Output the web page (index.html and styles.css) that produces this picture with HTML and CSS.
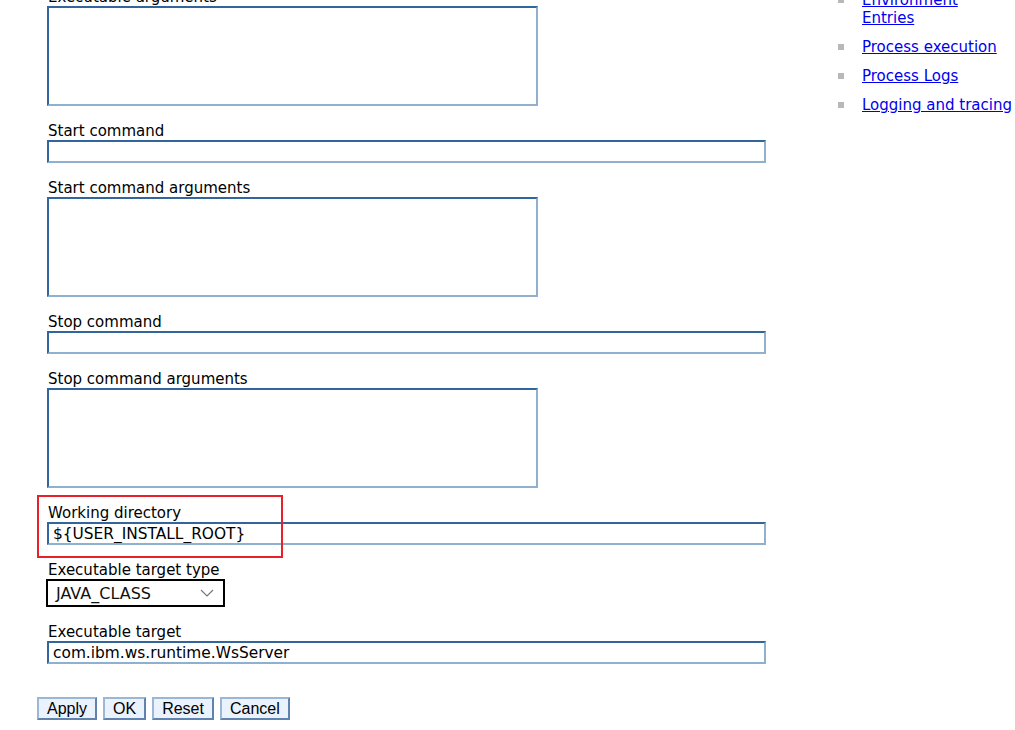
FILE: index.html
```html
<!DOCTYPE html>
<html>
<head>
<meta charset="utf-8">
<link rel="stylesheet" href="styles.css">
</head>
<body>
<div class="layout">
  <form class="main">
    <div class="field">
      <label class="lbl">Executable arguments</label>
      <textarea class="area"></textarea>
    </div>
    <div class="field">
      <label class="lbl">Start command</label>
      <input class="txt" type="text" value="">
    </div>
    <div class="field">
      <label class="lbl">Start command arguments</label>
      <textarea class="area"></textarea>
    </div>
    <div class="field">
      <label class="lbl">Stop command</label>
      <input class="txt" type="text" value="">
    </div>
    <div class="field">
      <label class="lbl">Stop command arguments</label>
      <textarea class="area"></textarea>
    </div>
    <div class="field field-marked">
      <span class="mark"></span>
      <label class="lbl">Working directory</label>
      <input class="txt" type="text" value="${USER_INSTALL_ROOT}">
    </div>
    <div class="field">
      <label class="lbl">Executable target type</label>
      <div class="select">
        <span>JAVA_CLASS</span>
        <svg class="chev" width="14" height="8" viewBox="0 0 14 8"><path d="M1 1 L7 7 L13 1" fill="none" stroke="#777" stroke-width="1.2"/></svg>
      </div>
    </div>
    <div class="field">
      <label class="lbl">Executable target</label>
      <input class="txt" type="text" value="com.ibm.ws.runtime.WsServer">
    </div>
    <div class="buttons">
      <button type="button" class="btn">Apply</button>
      <button type="button" class="btn">OK</button>
      <button type="button" class="btn">Reset</button>
      <button type="button" class="btn">Cancel</button>
    </div>
  </form>
  <aside class="side">
    <ul class="links">
      <li><a href="#">Environment<br>Entries</a></li>
      <li><a href="#">Process execution</a></li>
      <li><a href="#">Process Logs</a></li>
      <li><a href="#">Logging and tracing</a></li>
    </ul>
  </aside>
</div>
</body>
</html>
```

FILE: styles.css
```css
html, body {
  margin: 0;
  padding: 0;
  background: #fff;
}
body {
  font-family: "DejaVu Sans", Verdana, sans-serif;
  font-size: 15px;
  color: #000;
  overflow: hidden;
}
.layout {
  display: flex;
  margin-top: -12px;
}
.main {
  width: 793px;
  padding-left: 37px;
  flex: none;
}
.field {
  padding-left: 10px;
  margin-bottom: 16px;
}
.lbl {
  display: block;
  height: 18px;
  line-height: 18px;
  padding-left: 1px;
}
.txt, .area {
  display: block;
  box-sizing: border-box;
  margin: 0;
  border-style: solid;
  border-width: 2px;
  border-color: #31659b #8fb0cf #8fb0cf #31659b;
  background: #fff;
  font-family: "DejaVu Sans", Verdana, sans-serif;
  font-size: 15.4px;
  color: #000;
  outline: none;
}
.txt {
  width: 719px;
  height: 23px;
  padding: 0 4px;
}
.area {
  width: 491px;
  height: 100px;
  resize: none;
  padding: 2px;
}
.field-marked {
  position: relative;
}
.mark {
  position: absolute;
  left: 0;
  top: -9px;
  width: 246px;
  height: 63px;
  box-sizing: border-box;
  border: 2px solid #e8202a;
  pointer-events: none;
}
.select {
  box-sizing: border-box;
  width: 179px;
  height: 28px;
  margin-left: -1px;
  border: 2px solid #000;
  display: flex;
  align-items: center;
  justify-content: space-between;
  padding: 0 9px 0 8px;
  color: #111;
  font-size: 16px;
}
.chev {
  display: block;
}
.buttons {
  display: flex;
  gap: 6px;
  margin-top: 33px;
}
.btn {
  font-family: "Liberation Sans", Arial, sans-serif;
  font-size: 16px;
  height: 23px;
  line-height: 17px;
  padding: 0 8px;
  margin: 0;
  background: #eaf2fd;
  color: #000;
  border-style: solid;
  border-width: 2px;
  border-color: #9db6d3 #5f83ae #5f83ae #9db6d3;
  border-radius: 0;
}
.side {
  padding-left: 8px;
  padding-top: 3px;
}
.links {
  list-style: none;
  margin: 0;
  padding: 0;
}
.links li {
  position: relative;
  padding-left: 24px;
  line-height: 18px;
  margin-bottom: 11px;
  white-space: nowrap;
}
.links li::before {
  content: "";
  position: absolute;
  left: 0;
  top: 6px;
  width: 6px;
  height: 6px;
  background: #b8b8b8;
}
.links a {
  color: #0000ee;
  text-decoration: underline;
}
```
